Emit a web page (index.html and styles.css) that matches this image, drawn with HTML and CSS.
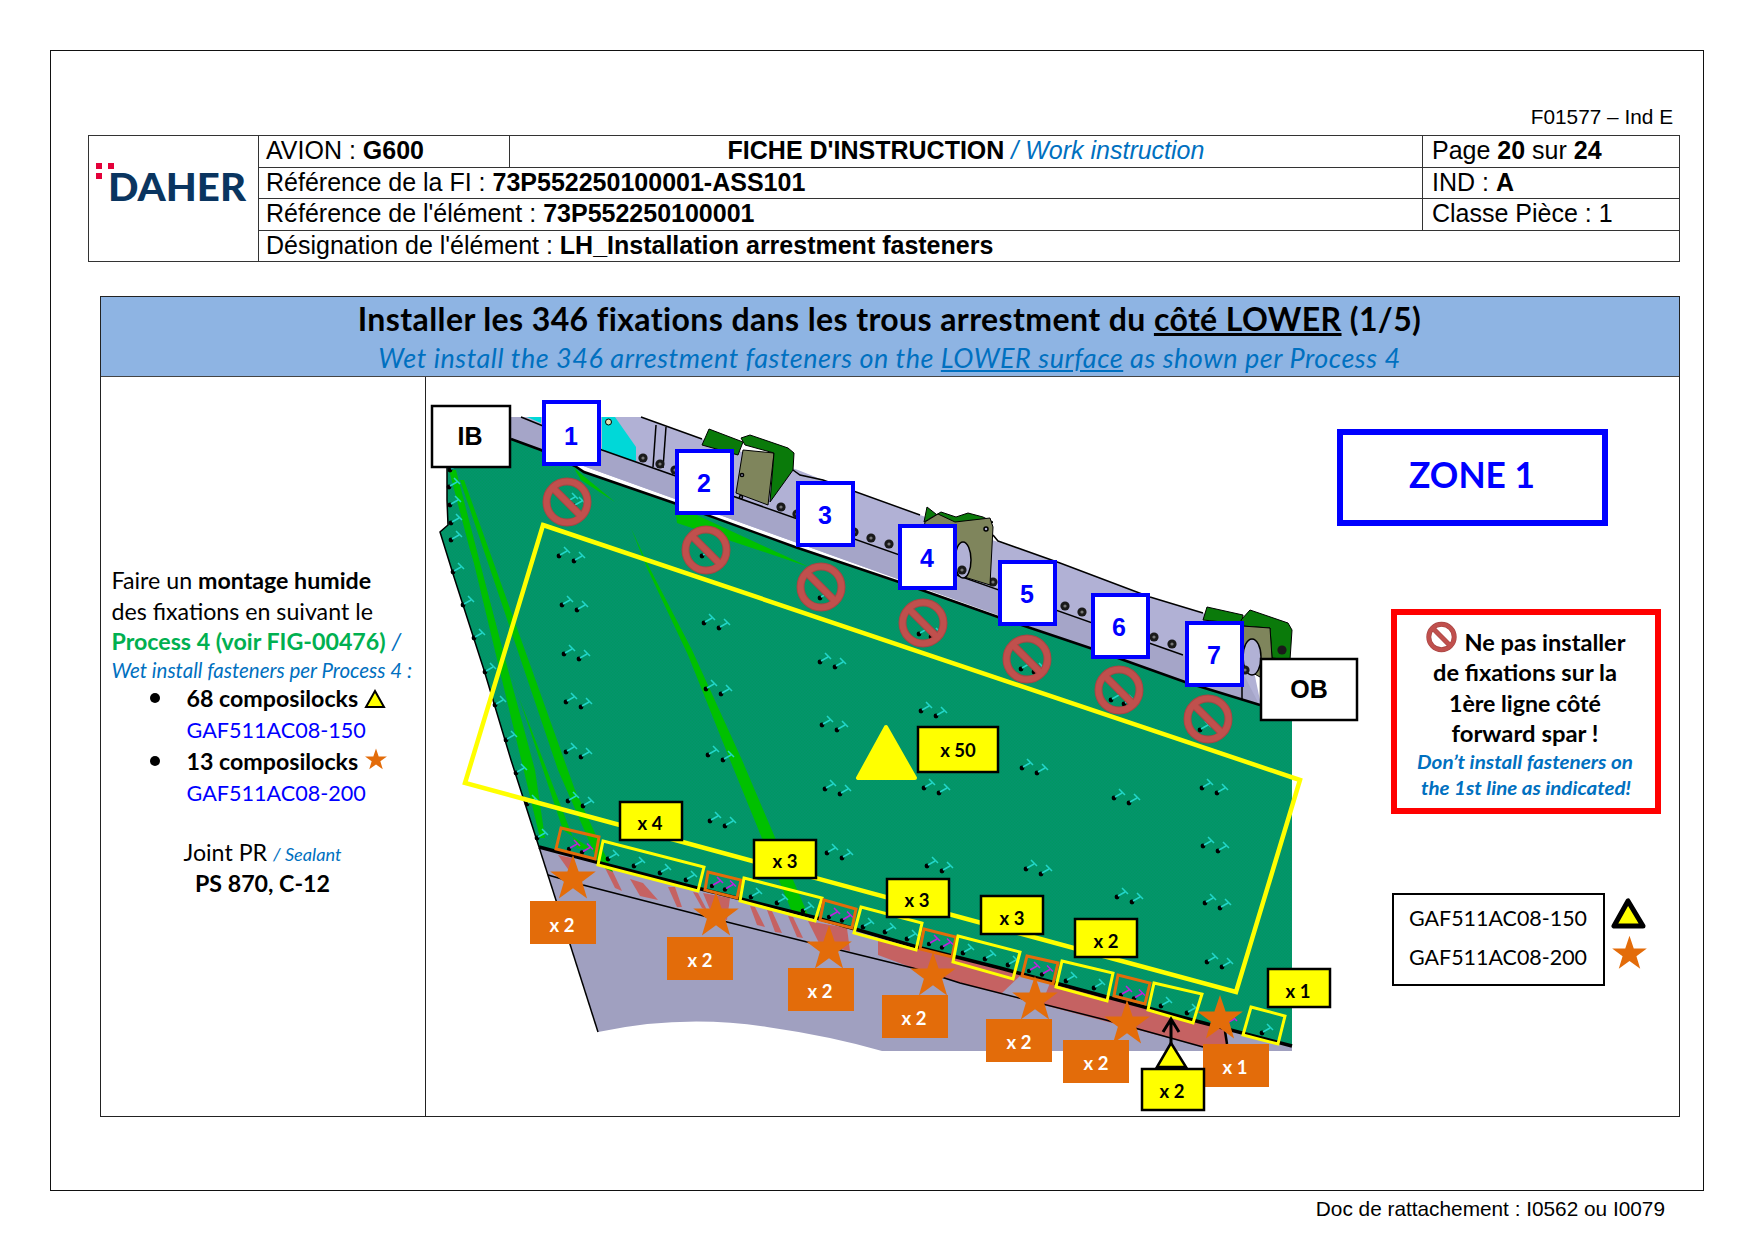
FILE: index.html
```html
<!DOCTYPE html>
<html lang="fr">
<head>
<meta charset="UTF-8">
<meta name="viewport" content="width=device-width, initial-scale=1.0">
<title>Fiche d'instruction - G600</title>
<link rel="stylesheet" href="styles.css">
</head>
<body>

<div class="sheet">
  <p class="form-ref">F01577 – Ind E</p>

  <div class="title-block">
    <div class="cell logo-cell">
      <svg class="logo" viewBox="0 0 170 126" width="170" height="126">
        <rect class="logo-dot" x="7" y="27" width="6" height="6"/>
        <rect class="logo-dot" x="19" y="27" width="6" height="6"/>
        <rect class="logo-dot" x="7" y="37" width="6" height="6"/>
        <text class="logo-text" x="19" y="65" textLength="138" lengthAdjust="spacingAndGlyphs">DAHER</text>
      </svg>
    </div>
    <div class="cell">AVION : <b>G600</b></div>
    <div class="cell center"><b>FICHE D'INSTRUCTION</b> <i class="en">/ Work instruction</i></div>
    <div class="cell side">Page <b>20</b> sur <b>24</b></div>
    <div class="cell span2">Référence de la FI : <b>73P552250100001-ASS101</b></div>
    <div class="cell side">IND : <b>A</b></div>
    <div class="cell span2">Référence de l'élément : <b>73P552250100001</b></div>
    <div class="cell side">Classe Pièce : 1</div>
    <div class="cell span3">Désignation de l'élément : <b>LH_Installation arrestment fasteners</b></div>
  </div>

  <section class="panel">
    <header class="panel-head">
      <h1>Installer les 346 fixations dans les trous arrestment du <u>côté LOWER</u> (1/5)</h1>
      <h2>Wet install the 346 arrestment fasteners on the <u>LOWER surface</u> as shown per Process 4</h2>
    </header>

    <div class="panel-body">
      <div class="notes">
        <p>Faire un <b>montage humide</b><br>des fixations en suivant le<br><b class="green">Process 4 (voir FIG-00476)</b> <i class="en">/</i></p>
        <p class="en small">Wet install fasteners per Process 4 :</p>
        <ul class="parts">
          <li><b>68 composilocks</b> <svg class="mini" viewBox="0 0 22 20" width="22" height="20"><polygon class="tri-mini" points="11,2 20,18 2,18"/></svg><br><span class="part-no">GAF511AC08-150</span></li>
          <li><b>13 composilocks</b> <svg class="mini" viewBox="-12 -12 24 24" width="24" height="24"><use href="#star" transform="scale(.48)"/></svg><br><span class="part-no">GAF511AC08-200</span></li>
        </ul>
        <p class="sealant">Joint PR <i class="en sealant-en">/ Sealant</i><br><b>PS 870, C-12</b></p>
      </div>

      <!-- viewBox uses sheet coordinates so the drawing points can be read straight off the page -->
      <svg class="drawing" viewBox="426 377 1253 739" width="1253" height="739">
        <defs>
          <pattern id="dither" width="3" height="3" patternUnits="userSpaceOnUse">
            <rect width="3" height="3" fill="#009763"/>
            <rect width="1.5" height="1.5" fill="#05936d"/>
            <rect x="1.5" y="1.5" width="1.5" height="1.5" fill="#05936d"/>
          </pattern>
          <polygon id="star" points="0,-24 5.6,-7.4 22.8,-7.4 9.1,2.8 14.1,19.4 0,9.2 -14.1,19.4 -9.1,2.8 -22.8,-7.4 -5.6,-7.4"/>
          <g id="nosign">
            <circle class="sign-edge" r="20.5"/>
            <line class="sign-edge-bar" x1="-14" y1="-14" x2="14" y2="14"/>
            <circle class="sign-ring" r="20.5"/>
            <line class="sign-bar" x1="-14" y1="-14" x2="14" y2="14"/>
          </g>
          <g id="fc">
            <circle r="2.4"/>
            <path class="f-cyan" d="M1 -1L8 -5M5 -9L11 -3"/>
          </g>
          <g id="fm">
            <circle r="2.2"/>
            <path class="f-mag" d="M1 -1L8 -5M5 -9L11 -3"/>
          </g>
          <g id="pair">
            <use href="#fc"/>
            <use href="#fc" x="15" y="5"/>
          </g>
          <g id="mpair">
            <use href="#fm"/>
            <use href="#fm" x="13" y="3.5"/>
          </g>
          <g id="bolt">
            <circle class="bolt" r="4.6"/>
            <circle class="bolt-core" r="1.6"/>
          </g>
        </defs>

        <!-- lower skin and spar -->
        <path class="skin" d="M539 847L598 1032Q683 1014 767 1027Q830 1036 882 1051L1292 1051L1292 1044Z"/>
        <g class="red-zone">
          <polygon points="558,855 572,858 582,880 570,872"/>
          <polygon points="605,868 612,870 622,891 615,888"/>
          <polygon points="630,879 643,883 658,900 640,896"/>
          <polygon points="668,887 675,887 682,907 677,907"/>
          <polygon points="693,892 698,893 707,910 702,908"/>
          <polygon points="703,893 730,898 727,920 713,917"/>
          <polygon points="750,906 755,907 765,927 757,925"/>
          <polygon points="767,910 772,911 782,933 775,932"/>
          <polygon points="788,916 793,917 803,938 797,937"/>
          <polygon points="808,921 847,928 850,951 820,945"/>
          <polygon points="878,938 1226,1028 1226,1046 1203,1047 960,983 913,968 878,955"/>
        </g>
        <polygon class="skin" points="1001,994 1021,975 1050,983 1042,1003"/>
        <polyline class="thin" points="548,875 583,885 727,922 807,942 913,968 960,983 1106,1020 1203,1047"/>
        <line class="thin" x1="539" y1="847" x2="598" y2="1032"/>

        <polygon class="spar" points="511,417 641,417 702,439 798,470 823,480 920,515 998,542 1060,563 1150,597 1203,613 1245,628 1262,710 511,440"/>
        <polygon class="spar-low" points="511,417 521,417 602,450 1183,655 1245,677 1262,710 511,440"/>
        <polygon class="cyan" points="602,417 615,417 636,447 636,462 602,450"/>
        <polygon class="cyan" points="527,417 541,417 541,423"/>
        <circle class="stud" cx="608.500" cy="422" r="3"/>
        <polyline class="thin" points="641,417 702,439"/>
        <polyline class="thin" points="793,470 800,475 823,480 920,515"/>
        <polyline class="thin" points="993,535 998,541 1060,563 1150,597 1203,613"/>
        <polyline class="thin" points="521,417 602,450 1183,655"/>
        <line class="thin" x1="656" y1="425" x2="653" y2="467"/>
        <line class="thin" x1="666" y1="427" x2="663" y2="468"/>
        <line class="thin" x1="1242" y1="687" x2="1242" y2="699"/>
        <use href="#bolt" x="643" y="458"/>
        <use href="#bolt" x="660" y="464"/>
        <use href="#bolt" x="675" y="470"/>
        <use href="#bolt" x="797" y="514"/>
        <use href="#bolt" x="854" y="532"/>
        <use href="#bolt" x="871" y="538"/>
        <use href="#bolt" x="889" y="544"/>
        <use href="#bolt" x="993" y="582"/>
        <use href="#bolt" x="1065" y="606"/>
        <use href="#bolt" x="1082" y="612"/>
        <use href="#bolt" x="1154" y="637"/>
        <use href="#bolt" x="1172" y="644"/>

        <!-- hinge fittings -->
        <g>
          <polygon class="olive" points="743,450 736,493 768,505 774,453"/>
          <circle class="olive-hole" cx="742" cy="475" r="1.6"/>
          <circle class="olive-hole" cx="741" cy="497" r="1.6"/>
          <polygon class="fit-green" points="709,429 702,445 738,455 743,442"/>
          <polygon class="fit-green" points="741,438 750,435 788,448 794,453 793,470 770,502 774,453 745,445"/>
          <use href="#bolt" x="781" y="507"/>
        </g>
        <g>
          <polygon class="fit-green" points="927,507 924,522 941,512 956,517 968,513 983,517 993,522 985,530 950,525"/>
          <polygon class="olive" points="938,514 955,522 990,518 993,527 990,585 958,575 920,550 925,522"/>
          <ellipse class="olive-hole" cx="963" cy="560" rx="8" ry="18"/>
          <circle class="olive-hole" cx="986" cy="529" r="2"/>
          <use href="#bolt" x="962" y="570"/>
        </g>
        <g>
          <polygon class="fit-green" points="1207,607 1203,620 1242,624 1243,615"/>
          <polygon class="fit-green" points="1241,620 1250,610 1288,623 1292,630 1290,660 1272,658 1270,628 1242,626"/>
          <polygon class="olive" points="1242,626 1270,628 1272,658 1260,677 1242,667"/>
          <ellipse class="olive-hole" cx="1252" cy="657" rx="9" ry="18"/>
          <circle class="bolt" cx="1282" cy="650" r="4.600"/>
          <use href="#bolt" x="1245" y="670"/>
        </g>

        <!-- panel -->
        <polygon class="plate" points="511,439 541,450 575,466 584,472 674,503 795,547 899,582 998,617 1090,648 1185,682 1260,705 1292,716 1292,1046 1200,1022 1107,997 1000,968 917,947 817,918 697,888 600,863 539,847 511,760 484,670 454,577 440,532 448,525 447,500 447,466"/>
        <g class="strip">
          <polygon points="574,468 615,502 581,480"/>
          <polygon points="675,505 809,567 677,523"/>
          <polygon points="449,470 456,470 500,640 563,830 593,850 577,848 520,700 470,550"/>
          <polygon points="460,480 464,480 575,790 613,872 600,866 558,770"/>
          <polygon points="452,472 455,472 535,770 545,838 540,838"/>
          <polygon points="631,528 648,565 692,650 742,760 808,915 792,912 730,760 688,655 647,568"/>
        </g>
        <polyline class="edge" points="511,439 541,450 575,466 584,472 674,503 795,547 899,582 998,617 1090,648 1185,682 1260,705"/>
        <polyline class="thin" points="447,466 447,500 448,525 440,532 454,577 484,670 511,760 539,847"/>
        <polyline class="edge-thick" points="539,847 600,863 697,888 817,918 917,947 1000,968 1107,997 1200,1022 1292,1046"/>

        <!-- fasteners -->
        <use href="#fc" x="450" y="470"/><use href="#fc" x="449" y="487"/><use href="#fc" x="450" y="505"/>
        <use href="#fc" x="451" y="523"/><use href="#fc" x="451" y="540"/><use href="#fc" x="453" y="572"/>
        <use href="#fc" x="463" y="605"/><use href="#fc" x="474" y="638"/><use href="#fc" x="485" y="672"/>
        <use href="#fc" x="495" y="705"/><use href="#fc" x="506" y="740"/><use href="#fc" x="516" y="773"/>
        <use href="#fc" x="527" y="804"/><use href="#fc" x="537" y="838"/>
        <use href="#fc" x="567" y="502"/><use href="#fc" x="574" y="506"/>
        <use href="#fc" x="702" y="556"/><use href="#fc" x="820" y="598"/><use href="#fc" x="919" y="634"/><use href="#fc" x="931" y="637"/>
        <use href="#fc" x="1021" y="669"/><use href="#fc" x="1034" y="672"/><use href="#fc" x="1111" y="700"/><use href="#fc" x="1124" y="704"/><use href="#fc" x="1200" y="730"/>
        <use href="#pair" x="559" y="556"/><use href="#pair" x="562" y="605"/><use href="#pair" x="564" y="654"/>
        <use href="#pair" x="566" y="702"/><use href="#pair" x="566" y="752"/><use href="#pair" x="568" y="801"/>
        <use href="#pair" x="704" y="623"/><use href="#pair" x="706" y="689"/><use href="#pair" x="708" y="755"/><use href="#pair" x="710" y="821"/>
        <use href="#pair" x="820" y="662"/><use href="#pair" x="822" y="725"/><use href="#pair" x="825" y="789"/><use href="#pair" x="827" y="853"/>
        <use href="#pair" x="921" y="711"/><use href="#pair" x="924" y="788"/><use href="#pair" x="927" y="866"/>
        <use href="#pair" x="1022" y="768"/><use href="#pair" x="1026" y="869"/>
        <use href="#pair" x="1114" y="798"/><use href="#pair" x="1117" y="897"/>
        <use href="#pair" x="1202" y="788"/><use href="#pair" x="1203" y="846"/><use href="#pair" x="1205" y="903"/><use href="#pair" x="1207" y="962"/>

        <use href="#mpair" x="569" y="849"/><use href="#mpair" x="712" y="886"/><use href="#mpair" x="829" y="917"/>
        <use href="#mpair" x="929" y="944"/><use href="#mpair" x="1029" y="971"/><use href="#mpair" x="1121" y="995"/>
        <use href="#fm" x="1226" y="1024"/>
        <use href="#fc" x="608" y="859"/><use href="#fc" x="634" y="866"/><use href="#fc" x="660" y="873"/><use href="#fc" x="686" y="880"/>
        <use href="#fc" x="751" y="897"/><use href="#fc" x="777" y="903"/><use href="#fc" x="803" y="911"/>
        <use href="#fc" x="863" y="927"/><use href="#fc" x="885" y="932"/><use href="#fc" x="907" y="939"/>
        <use href="#fc" x="963" y="953"/><use href="#fc" x="985" y="959"/><use href="#fc" x="1008" y="965"/>
        <use href="#fc" x="1066" y="981"/><use href="#fc" x="1094" y="988"/>
        <use href="#fc" x="1161" y="1006"/><use href="#fc" x="1187" y="1013"/><use href="#fc" x="1262" y="1033"/>

        <!-- zones -->
        <polygon class="zone-y big" points="543,525 1300,780 1236,992 465,783"/>
        <polygon class="zone-o" points="561,828 599,837 595,859 556,849"/>
        <polygon class="zone-y" points="603,841 704,867 698,891 598,865"/>
        <polygon class="zone-o" points="708,872 741,880 737,898 705,890"/>
        <polygon class="zone-y" points="744,878 822,898 815,921 740,901"/>
        <polygon class="zone-o" points="824,900 856,909 852,928 820,920"/>
        <polygon class="zone-y" points="861,907 922,923 916,950 854,933"/>
        <polygon class="zone-o" points="924,929 956,937 952,957 920,949"/>
        <polygon class="zone-y" points="958,936 1020,952 1013,979 953,962"/>
        <polygon class="zone-o" points="1027,956 1058,963 1053,984 1022,976"/>
        <polygon class="zone-y" points="1062,961 1113,973 1107,1001 1056,987"/>
        <polygon class="zone-o" points="1118,975 1150,983 1145,1004 1114,996"/>
        <polygon class="zone-y" points="1154,983 1202,994 1193,1023 1148,1010"/>
        <polygon class="zone-y" points="1251,1007 1285,1016 1278,1044 1243,1035"/>

        <!-- no fastener signs -->
        <use href="#nosign" x="567" y="502"/>
        <use href="#nosign" x="706" y="550"/>
        <use href="#nosign" x="821" y="587"/>
        <use href="#nosign" x="923" y="623"/>
        <use href="#nosign" x="1027" y="659"/>
        <use href="#nosign" x="1119" y="690"/>
        <use href="#nosign" x="1208" y="719"/>

        <!-- station labels -->
        <rect class="tag" x="432" y="406" width="78" height="61"/>
        <text class="tag-text" x="470" y="445">IB</text>
        <rect class="tag" x="1261" y="659" width="96" height="61"/>
        <text class="tag-text" x="1309" y="698">OB</text>
        <rect class="num" x="544" y="402" width="55" height="62"/><text class="num-text" x="571" y="445">1</text>
        <rect class="num" x="677" y="451" width="55" height="62"/><text class="num-text" x="704" y="492">2</text>
        <rect class="num" x="798" y="483" width="55" height="62"/><text class="num-text" x="825" y="524">3</text>
        <rect class="num" x="900" y="526" width="55" height="62"/><text class="num-text" x="927" y="567">4</text>
        <rect class="num" x="1000" y="562" width="55" height="62"/><text class="num-text" x="1027" y="603">5</text>
        <rect class="num" x="1093" y="595" width="55" height="62"/><text class="num-text" x="1119" y="636">6</text>
        <rect class="num" x="1187" y="623" width="55" height="62"/><text class="num-text" x="1214" y="664">7</text>

        <!-- quantities, orange stars -->
        <use class="star" href="#star" x="573" y="879"/>
        <use class="star" href="#star" x="716" y="916"/>
        <use class="star" href="#star" x="829" y="949"/>
        <use class="star" href="#star" x="933" y="976"/>
        <use class="star" href="#star" x="1035" y="1000"/>
        <use class="star" href="#star" x="1127" y="1024"/>
        <line class="thin heavy" x1="1225" y1="1031" x2="1227" y2="1044"/>
        <use class="star" href="#star" x="1220" y="1019"/>

        <rect class="qty-o" x="530" y="901" width="66" height="43"/><text class="qty-o-text" x="562" y="932">x 2</text>
        <rect class="qty-o" x="667" y="937" width="66" height="43"/><text class="qty-o-text" x="700" y="967">x 2</text>
        <rect class="qty-o" x="788" y="968" width="66" height="43"/><text class="qty-o-text" x="820" y="998">x 2</text>
        <rect class="qty-o" x="882" y="995" width="66" height="43"/><text class="qty-o-text" x="914" y="1025">x 2</text>
        <rect class="qty-o" x="986" y="1019" width="66" height="43"/><text class="qty-o-text" x="1019" y="1049">x 2</text>
        <rect class="qty-o" x="1063" y="1040" width="66" height="43"/><text class="qty-o-text" x="1096" y="1070">x 2</text>
        <rect class="qty-o" x="1203" y="1044" width="66" height="43"/><text class="qty-o-text" x="1235" y="1074">x 1</text>

        <!-- quantities, yellow triangles -->
        <path class="tri-big" d="M886 727L858 778H915Z"/>
        <rect class="qty-y" x="918" y="727" width="80" height="45"/><text class="qty-y-text" x="958" y="757">x 50</text>
        <rect class="qty-y" x="620" y="802" width="62" height="38"/><text class="qty-y-text" x="650" y="830">x 4</text>
        <rect class="qty-y" x="754" y="840" width="62" height="38"/><text class="qty-y-text" x="785" y="868">x 3</text>
        <rect class="qty-y" x="887" y="879" width="62" height="38"/><text class="qty-y-text" x="917" y="907">x 3</text>
        <rect class="qty-y" x="981" y="896" width="62" height="38"/><text class="qty-y-text" x="1012" y="925">x 3</text>
        <rect class="qty-y" x="1075" y="919" width="62" height="38"/><text class="qty-y-text" x="1106" y="948">x 2</text>
        <rect class="qty-y" x="1268" y="969" width="62" height="38"/><text class="qty-y-text" x="1298" y="998">x 1</text>
        <path class="arrow" d="M1171 1044V1019M1163 1032L1171 1019L1179 1032"/>
        <polygon class="tri-small" points="1171,1043 1157,1067 1186,1067"/>
        <rect class="qty-y" x="1142" y="1069" width="62" height="41"/><text class="qty-y-text" x="1172" y="1098">x 2</text>

        <!-- zone title -->
        <rect class="zone-box" x="1340" y="432" width="265" height="91"/>
        <text class="zone-title" x="1472" y="488" textLength="126" lengthAdjust="spacingAndGlyphs">ZONE 1</text>

        <!-- warning -->
        <rect class="warn-box" x="1394" y="612" width="264" height="199"/>
        <use href="#nosign" transform="translate(1441.5 637) scale(.62)"/>
        <text class="warn" x="1545" y="651" textLength="161" lengthAdjust="spacingAndGlyphs">Ne pas installer</text>
        <text class="warn" x="1525" y="681" textLength="184" lengthAdjust="spacingAndGlyphs">de fixations sur la</text>
        <text class="warn" x="1525" y="712" textLength="152" lengthAdjust="spacingAndGlyphs">1ère ligne côté</text>
        <text class="warn" x="1525" y="742" textLength="147" lengthAdjust="spacingAndGlyphs">forward spar !</text>
        <text class="warn-en" x="1525" y="769" textLength="216" lengthAdjust="spacingAndGlyphs">Don’t install fasteners on</text>
        <text class="warn-en" x="1526" y="795" textLength="210" lengthAdjust="spacingAndGlyphs">the 1st line as indicated!</text>

        <!-- legend -->
        <rect class="legend-box" x="1393" y="894" width="211" height="91"/>
        <text class="legend" x="1498" y="926" textLength="178" lengthAdjust="spacingAndGlyphs">GAF511AC08-150</text>
        <text class="legend" x="1498" y="965" textLength="178" lengthAdjust="spacingAndGlyphs">GAF511AC08-200</text>
        <polygon class="legend-tri" points="1628,901 1614,926 1643,926"/>
        <use class="star" href="#star" transform="translate(1629.500 954) scale(.76)"/>
      </svg>
    </div>
  </section>
</div>

<p class="doc-ref">Doc de rattachement : I0562 ou I0079</p>

</body>
</html>
```

FILE: styles.css
```css
body {
  margin: 0;
  background: #fff;
  color: #000;
  font-family: "Liberation Sans", Arial, sans-serif;
}

/* Outer frame */
.sheet {
  box-sizing: border-box;
  width: 1654px;
  height: 1141px;
  margin: 50px 0 0 50px;
  padding-top: 55px;
  border: 1.5px solid #111;
}

.form-ref {
  margin: 0 30px 0 0;
  height: 29px;
  line-height: 22px;
  font-size: 20.8px;
  text-align: right;
}

/* Title block */
.title-block {
  display: grid;
  grid-template-columns: 170px 251px 913px 257px;
  grid-template-rows: repeat(4, 31.5px);
  width: 1591px;
  margin-left: 37px;
  border-right: 1.5px solid #333;
  border-bottom: 1.5px solid #333;
  font-size: 25px;
}

.cell {
  box-sizing: border-box;
  padding-left: 7px;
  line-height: 28px;
  border-left: 1.5px solid #333;
  border-top: 1.5px solid #333;
  white-space: nowrap;
}

.center { text-align: center; padding-left: 0; }
.side { padding-left: 9px; }
.span2 { grid-column: span 2; }
.span3 { grid-column: span 3; }
.logo-cell { grid-row: span 4; padding: 0; }
.logo { display: block; }
.logo-dot { fill: #e4003a; }
.logo-text { font: 900 37px "Lato", sans-serif; fill: #0a3560; }

.en { color: #0070c0; }
.cell .en { font-weight: normal; }

/* Main panel */
.panel {
  width: 1580px;
  margin: 34px 0 0 48.5px;
  border: 1.5px solid #222;
  box-sizing: border-box;
}

.panel-head {
  box-sizing: border-box;
  height: 80px;
  padding-top: 2px;
  background: #8eb4e3;
  border-bottom: 1.5px solid #444;
  text-align: center;
  font-family: "Lato", sans-serif;
}

.panel-head h1 {
  margin: 0;
  font-size: 32px;
  letter-spacing: 0.4px;
  line-height: 40px;
  font-weight: 700;
}

.panel-head h2 {
  margin: 0;
  padding-top: 2px;
  font-size: 27px;
  letter-spacing: 0.55px;
  line-height: 34px;
  font-weight: 400;
  font-style: italic;
  color: #0070c0;
}

.panel-body {
  display: grid;
  grid-template-columns: 325px 1fr;
  height: 739px;
}

/* Left column */
.notes {
  box-sizing: border-box;
  padding: 188px 0 0 11px;
  border-right: 1.5px solid #222;
  font-family: "Lato", sans-serif;
  font-size: 23.2px;
  line-height: 30.500px;
  white-space: nowrap;
}

.notes p { margin: 0; }
.green { color: #00b050; }
.small { font-size: 20.5px; font-style: italic; line-height: 26px; }

.parts {
  list-style: none;
  margin: 0;
  padding: 0;
  line-height: 31px;
}

.parts li {
  position: relative;
  padding-left: 75px;
}

.parts li::before {
  content: "";
  position: absolute;
  left: 38px;
  top: 10px;
  width: 10px;
  height: 10px;
  border-radius: 50%;
  background: #000;
}

.part-no { color: #0000ff; font-size: 21.6px; }
.mini { vertical-align: 2px; margin-bottom: -4px; }
.tri-mini { fill: #ff0; stroke: #000; stroke-width: 2; }
.mini use { fill: #e36c0a; }

.notes .sealant {
  margin-top: 29px;
  text-align: center;
  width: 302px;
  line-height: 29.5px;
}
.sealant-en { font-size: 18.2px; }

/* Drawing */
.drawing { display: block; }

.skin { fill: #a0a0c0; }
.red-zone { fill: #c56262; }
.thin { fill: none; stroke: #000; stroke-width: 1.500; }
.heavy { stroke-width: 2.500; }
.spar { fill: #b1b1d5; }
.spar-low { fill: #a5a5c8; }
.cyan { fill: #00d8d8; }
.stud { fill: #dde0b0; stroke: #000; stroke-width: 1; }
.bolt { fill: #1a1a1a; }
.bolt-core { fill: #777; }
.olive { fill: #7f855c; stroke: #000; stroke-width: 1; }
.olive-hole { fill: #b1b1d5; stroke: #000; stroke-width: 1.500; }
.fit-green { fill: #0a7a0a; stroke: #000; stroke-width: 1; }
.plate { fill: url(#dither); }
.strip { fill: #00c000; }
.edge { fill: none; stroke: #000; stroke-width: 2.500; }
.edge-thick { fill: none; stroke: #000; stroke-width: 3.500; }

.f-cyan { fill: none; stroke: #22d5c8; stroke-width: 1.500; }
.f-mag { fill: none; stroke: #c020e0; stroke-width: 1.500; }

.zone-y { fill: none; stroke: #ff0; stroke-width: 3; }
.zone-y.big { stroke-width: 4.500; }
.zone-o { fill: none; stroke: #e36c0a; stroke-width: 3; }

.sign-edge { fill: none; stroke: #a84644; stroke-width: 8; }
.sign-edge-bar { stroke: #a84644; stroke-width: 8; }
.sign-ring { fill: none; stroke: #c0504d; stroke-width: 6; }
.sign-bar { stroke: #c0504d; stroke-width: 6; }

.tag { fill: #fff; stroke: #000; stroke-width: 2.500; }
.tag-text { font: 700 25px "Liberation Sans", sans-serif; text-anchor: middle; }
.num { fill: #fff; stroke: #0000ff; stroke-width: 4; }
.num-text { font: 700 25px "Liberation Sans", sans-serif; fill: #0000ff; text-anchor: middle; }

.star { fill: #e36c0a; }
.qty-o { fill: #e36c0a; }
.qty-o-text { font: 700 18.500px "Lato", sans-serif; fill: #fff; text-anchor: middle; }
.qty-y { fill: #ff0; stroke: #000; stroke-width: 2.500; }
.qty-y-text { font: 700 18.500px "Lato", sans-serif; text-anchor: middle; }
.tri-big { fill: #ff0; stroke: #ff0; stroke-width: 4; stroke-linejoin: round; }
.tri-small { fill: #ff0; stroke: #000; stroke-width: 2.500; }
.arrow { fill: none; stroke: #000; stroke-width: 3; }

.zone-box { fill: none; stroke: #0000ff; stroke-width: 6; }
.zone-title { font: 700 36px "Lato", sans-serif; fill: #0000ff; text-anchor: middle; }

.warn-box { fill: #fff; stroke: #f00; stroke-width: 6; }
.warn { font: 700 22px "Lato", sans-serif; text-anchor: middle; }
.warn-en { font: italic 700 18.500px "Lato", sans-serif; fill: #0070c0; text-anchor: middle; }

.legend-box { fill: #fff; stroke: #000; stroke-width: 2; }
.legend { font: 400 22px "Lato", sans-serif; text-anchor: middle; }
.legend-tri { fill: #ff0; stroke: #000; stroke-width: 5; stroke-linejoin: round; }

/* Footer line */
.doc-ref {
  margin: 6px 0 0;
  padding-right: 89px;
  font-size: 20.8px;
  line-height: 23px;
  text-align: right;
}
```
